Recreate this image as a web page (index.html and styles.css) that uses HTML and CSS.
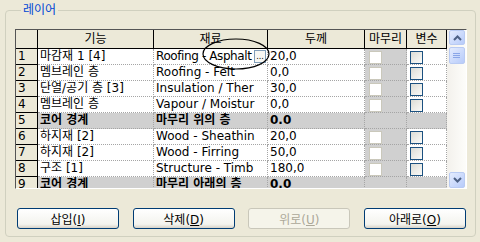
FILE: index.html
```html
<!DOCTYPE html>
<html lang="ko">
<head>
<meta charset="UTF-8">
<title>레이어</title>
<link rel="stylesheet" href="styles.css">
</head>
<body>
<fieldset class="group">
<legend>레이어</legend>
<div class="grid-frame">
  <div class="grid">
    <div class="row head">
      <div class="cell num"></div>
      <div class="cell">기능</div>
      <div class="cell">재료</div>
      <div class="cell">두께</div>
      <div class="cell">마무리</div>
      <div class="cell">변수</div>
    </div>
    <div class="row">
      <div class="cell num">1</div>
      <div class="cell">마감재 1 [4]</div>
      <div class="cell mat"><span class="clip">Roofing - Asphalt</span><span class="dots">...</span></div>
      <div class="cell">20,0</div>
      <div class="cell fin"><span class="chk off"></span></div>
      <div class="cell"><span class="chk"></span></div>
    </div>
    <div class="row">
      <div class="cell num">2</div>
      <div class="cell">멤브레인 층</div>
      <div class="cell">Roofing - Felt</div>
      <div class="cell">0,0</div>
      <div class="cell fin"><span class="chk off"></span></div>
      <div class="cell"><span class="chk"></span></div>
    </div>
    <div class="row">
      <div class="cell num">3</div>
      <div class="cell">단열/공기 층 [3]</div>
      <div class="cell">Insulation / Ther</div>
      <div class="cell">30,0</div>
      <div class="cell fin"><span class="chk off"></span></div>
      <div class="cell"><span class="chk"></span></div>
    </div>
    <div class="row">
      <div class="cell num">4</div>
      <div class="cell">멤브레인 층</div>
      <div class="cell">Vapour / Moistur</div>
      <div class="cell">0,0</div>
      <div class="cell fin"><span class="chk off"></span></div>
      <div class="cell"><span class="chk"></span></div>
    </div>
    <div class="row core">
      <div class="cell num">5</div>
      <div class="cell">코어 경계</div>
      <div class="cell">마무리 위의 층</div>
      <div class="cell">0.0</div>
      <div class="cell"></div>
      <div class="cell"></div>
    </div>
    <div class="row">
      <div class="cell num">6</div>
      <div class="cell">하지재 [2]</div>
      <div class="cell">Wood - Sheathin</div>
      <div class="cell">20,0</div>
      <div class="cell fin"><span class="chk off"></span></div>
      <div class="cell"><span class="chk"></span></div>
    </div>
    <div class="row">
      <div class="cell num">7</div>
      <div class="cell">하지재 [2]</div>
      <div class="cell">Wood - Firring</div>
      <div class="cell">50,0</div>
      <div class="cell fin"><span class="chk off"></span></div>
      <div class="cell"><span class="chk"></span></div>
    </div>
    <div class="row">
      <div class="cell num">8</div>
      <div class="cell">구조 [1]</div>
      <div class="cell">Structure - Timb</div>
      <div class="cell">180,0</div>
      <div class="cell fin"><span class="chk off"></span></div>
      <div class="cell"><span class="chk"></span></div>
    </div>
    <div class="row core">
      <div class="cell num">9</div>
      <div class="cell">코어 경계</div>
      <div class="cell">마무리 아래의 층</div>
      <div class="cell">0.0</div>
      <div class="cell"></div>
      <div class="cell"></div>
    </div>
  </div>
  <div class="vscroll">
    <div class="sb-btn"><svg width="9" height="6" viewBox="0 0 9 6"><path d="M1 5 L4.5 1.5 L8 5" fill="none" stroke="#4D6185" stroke-width="2"/></svg></div>
    <div class="sb-btn thumb"><svg width="8" height="7" viewBox="0 0 8 7"><path d="M0 1.5 H7 M0 3.5 H7 M0 5.5 H7" stroke="#8AA6E8" stroke-width="1"/></svg></div>
    <div class="sb-btn down"><svg width="9" height="6" viewBox="0 0 9 6"><path d="M1 1 L4.5 4.5 L8 1" fill="none" stroke="#4D6185" stroke-width="2"/></svg></div>
  </div>
  <svg class="mark" width="74" height="36" viewBox="0 0 74 36"><ellipse cx="36" cy="18" rx="33" ry="15" fill="none" stroke="#000" stroke-width="1.2"/></svg>
</div>
<div class="buttons">
  <button class="btn">삽입(<u>I</u>)</button>
  <button class="btn">삭제(<u>D</u>)</button>
  <button class="btn" disabled>위로(<u>U</u>)</button>
  <button class="btn">아래로(<u>O</u>)</button>
</div>
</fieldset>
</body>
</html>
```

FILE: styles.css
```css
* { box-sizing: border-box; }
body { margin: 0; background-color: #ECE9D8; color: #000; font-family: "DejaVu Sans", "Noto Sans CJK KR", sans-serif; font-size: 12px; }

.group { margin: 3px 4px 0 5px; padding: 12px 8px 0 9px; height: 234px; border: 1px solid #D0D0BF; border-radius: 4px; }
.group legend { margin-left: 6px; padding: 0 2px; color: #0046D5; line-height: 14px; }

.grid-frame { position: relative; display: flex; height: 160px; background-color: #fff; border: 1px solid; border-color: #555 #fff #fff #555; }
.grid { width: 431px; overflow: hidden; }
.row { display: grid; grid-template-columns: 22px 116px 114px 97px 42px 40px; height: 16px; }
.row.head { height: 19px; }
.cell { padding-left: 2px; line-height: 15px; white-space: nowrap; overflow: hidden; background-color: #fff; border-right: 1px dotted #A5A5A5; border-bottom: 1px dotted #A5A5A5; }
.head .cell { padding: 0; text-align: center; line-height: 18px; background-color: #ECE9D8; border-right: 1px solid #000; border-bottom: 1px solid #000; }
.cell.num { background-color: #ECE9D8; border-right: 1px solid #000; border-bottom: 1px solid #000; }
.cell.fin { background-color: #D0D0D0; }
.core .cell { background-color: #D0D0D0; font-weight: bold; }
.core .cell.num { background-color: #ECE9D8; font-weight: normal; }

.mat { display: flex; }
.mat .clip { flex: 1; overflow: hidden; letter-spacing: -0.4px; }
.dots { width: 12px; height: 13px; margin: 1px 1px 0 0; border: 1px solid #7F9DB9; background-color: #F7F7F3; font-size: 8px; line-height: 12px; text-align: center; }

.chk { display: block; width: 13px; height: 13px; margin: 2px 0 0 1px; border: 1px solid #1C5180; background: linear-gradient(135deg, #DCDCD5, #FBFBF9); }
.chk.off { margin-left: 2px; border-color: #CAC8BB; background: #fff; }

.vscroll { width: 19px; display: flex; flex-direction: column; padding: 0 1px 0 2px; background: linear-gradient(90deg, #F3F1EC, #FDFDFA); }
.sb-btn { height: 15px; display: flex; align-items: center; justify-content: center; border: 1px solid #B9CBF3; border-radius: 2px; background: linear-gradient(135deg, #E4ECFE, #B7CBFA); }
.sb-btn.thumb { height: 17px; margin-top: 2px; }
.sb-btn.down { height: 16px; margin-top: auto; }

.mark { position: absolute; left: 184px; top: 6px; pointer-events: none; }

.buttons { display: flex; justify-content: space-between; margin-top: 19px; padding: 0 1px 0 2px; }
.btn { width: 102px; height: 21px; padding: 0; font-family: inherit; font-size: 12px; color: #000; border: 1px solid #003C74; border-radius: 3px; background: linear-gradient(#FFFFFF, #F3F3EE 80%, #D8D3C8); }
.btn:disabled { color: #ACA899; border-color: #C9C7BA; background: #F5F4EA; }
```
